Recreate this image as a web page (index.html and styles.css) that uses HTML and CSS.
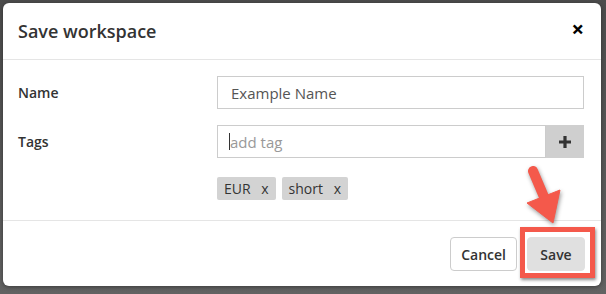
FILE: index.html
```html
<!DOCTYPE html>
<html lang="en">
<head>
    <meta charset="UTF-8">
    <title>Save workspace</title>
    <link rel="stylesheet" href="styles.css">
</head>
<body>
    <div class="modal">
        <div class="modal-header">
            <h4>Save workspace</h4>
            <span class="close">&times;</span>
        </div>
        <div class="modal-body">
            <div class="row">
                <label for="name">Name</label>
                <input type="text" id="name" class="field" value="Example Name">
            </div>
            <div class="row">
                <label for="tag">Tags</label>
                <div class="tag-input">
                    <span class="caret"></span>
                    <input type="text" id="tag" class="field" placeholder="add tag">
                    <div class="add-btn">
                        <svg width="14" height="14" viewBox="0 0 14 14"><path d="M7 1v12M1 7h12" stroke="#333" stroke-width="3.2"/></svg>
                    </div>
                </div>
            </div>
            <div class="row">
                <span></span>
                <div class="tags">
                    <span class="tag">EUR <i>x</i></span>
                    <span class="tag">short <i>x</i></span>
                </div>
            </div>
        </div>
        <div class="modal-footer">
            <button class="btn">Cancel</button>
            <button class="btn btn-save">Save</button>
        </div>
    </div>

    <!-- annotation drawn over the screenshot -->
    <div class="highlight"></div>
    <svg class="arrow" width="606" height="294" viewBox="0 0 606 294">
        <g fill="#f4594b" stroke="#f4594b">
            <line x1="533" y1="171" x2="547" y2="204" stroke-width="10" stroke-linecap="round"/>
            <polygon points="527,203 560,190 553,223" stroke-width="1" stroke-linejoin="round"/>
        </g>
    </svg>
</body>
</html>
```

FILE: styles.css
```css
body {
    margin: 0;
    padding: 3px 5px 8px 3px;
    background: linear-gradient(#4c4c4c, #626262);
    height: 283px;
    font-family: "Open Sans", "DejaVu Sans", sans-serif;
    color: #333;
}

.modal {
    width: 598px;
    height: 283px;
    background: #fff;
    border-radius: 6px;
    display: flex;
    flex-direction: column;
    box-shadow: 0 1px 4px rgba(0, 0, 0, 0.4);
}

.modal-header {
    height: 56px;
    border-bottom: 1px solid #e5e5e5;
    display: flex;
    align-items: center;
    justify-content: space-between;
    padding: 0 17px 0 15px;
}

.modal-header h4 {
    margin: 0;
    font-size: 18px;
    font-weight: 600;
    color: #333;
}

.close {
    font-size: 22px;
    font-weight: bold;
    color: #000;
    line-height: 1;
    margin-top: -6px;
}

.modal-body {
    padding: 16px 17px 0 15px;
    height: 144px;
    border-bottom: 1px solid #e5e5e5;
    display: flex;
    flex-direction: column;
    gap: 16px;
}

.row {
    display: grid;
    grid-template-columns: 199px 367px;
    align-items: center;
}

.row:last-child {
    margin-top: 3px;
}

.row label {
    font-size: 14px;
    font-weight: 600;
    color: #333;
}

.field {
    box-sizing: border-box;
    height: 33px;
    border: 1px solid #ccc;
    padding: 0 13px;
    font-family: inherit;
    font-size: 15px;
    font-weight: 500;
    color: #555;
    outline: none;
}

.field::placeholder {
    color: #999;
    font-weight: 400;
}

.tag-input {
    display: flex;
    position: relative;
}

.tag-input .field {
    flex: 1;
    padding-left: 12px;
}

.caret {
    position: absolute;
    left: 12px;
    top: 8px;
    width: 1px;
    height: 17px;
    background: #333;
}

.add-btn {
    width: 38px;
    height: 33px;
    background: #cfcfcf;
    display: flex;
    align-items: center;
    justify-content: center;
}

.tags {
    display: flex;
    gap: 6px;
}

.tag {
    background: #d3d3d3;
    border-radius: 2px;
    height: 23px;
    padding: 0 7px;
    font-size: 14px;
    line-height: 23px;
    color: #333;
}

.tag i {
    font-style: normal;
    margin-left: 7px;
}

.modal-footer {
    display: flex;
    justify-content: flex-end;
    gap: 10px;
    padding: 16px 16px 0 0;
}

.btn {
    height: 34px;
    padding: 0 10px;
    border: 1px solid #ccc;
    border-radius: 4px;
    background: #fff;
    font-family: inherit;
    font-size: 14px;
    font-weight: 600;
    color: #333;
}

.btn-save {
    background: #e0e0e0;
    border-color: #e0e0e0;
    width: 58px;
}

.highlight {
    position: absolute;
    left: 520px;
    top: 227px;
    width: 65px;
    height: 41px;
    border: 5px solid #f4594b;
    box-shadow: 1px 2px 3px rgba(0, 0, 0, 0.45);
}

.arrow {
    position: absolute;
    left: 0;
    top: 0;
    filter: drop-shadow(1px 2px 2px rgba(0, 0, 0, 0.4));
}
```
